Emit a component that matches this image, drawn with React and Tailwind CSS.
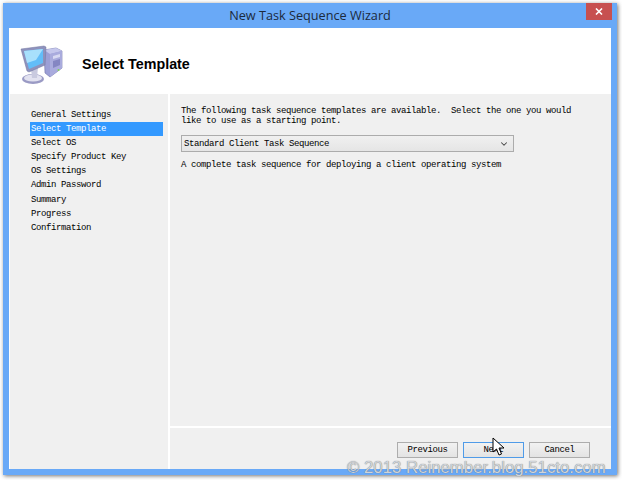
import { ChevronDown } from "lucide-react";

const STEPS = [
  "General Settings",
  "Select Template",
  "Select OS",
  "Specify Product Key",
  "OS Settings",
  "Admin Password",
  "Summary",
  "Progress",
  "Confirmation",
];

const mono = "font-['Liberation_Mono',monospace] text-[9px] tracking-[-0.4px]";

function ComputerIcon() {
  return (
    <svg width="44" height="42" viewBox="20 44 44 42">
      {/* tower */}
      <path d="M44 50 L56 48 L62 51 L62 68 L50 77 L45 73 Z" fill="#9c9fd6" stroke="#6f72a8" strokeWidth="0.6" />
      <path d="M44 50 L56 48 L62 51 L50 54 Z" fill="#c5c7ec" />
      <path d="M50 54 L62 51 L62 68 L50 77 Z" fill="#a9abdd" />
      <path d="M53 56 L60 54 L60 57 L53 59 Z" fill="#d8d9f2" />
      <path d="M53 61 L60 59 L60 65 L53 68 Z" fill="#8486c2" />
      <circle cx="58.500" cy="70" r="1" fill="#7fd05a" />
      {/* stand */}
      <ellipse cx="33" cy="79" rx="11" ry="5" fill="#9a9ac4" />
      <ellipse cx="33" cy="78" rx="9" ry="3.600" fill="#e2e2f0" />
      <path d="M31 68 L38 67 L37 78 L32 78 Z" fill="#c9cadf" />
      {/* monitor */}
      <path d="M21 49 L44 46 L46 47 L45 65 L29 72 L27 71 Z" fill="#8e92bd" stroke="#70749f" strokeWidth="0.5" />
      <path d="M24 51 L43 49 L43 63 L29 69 Z" fill="#62bdf8" />
      <path d="M24 51 L43 49 L36 60 L27 63 Z" fill="#a8e0fc" />
    </svg>
  );
}

function CursorIcon() {
  return (
    <svg width="13" height="19" viewBox="0 0 13 19">
      <path d="M1 1 L1 15 L4.500 12 L7 18 L9.500 17 L7 11 L12 11 Z" fill="#fff" stroke="#000" strokeWidth="1" />
    </svg>
  );
}

function WizardButton({ label, focused }) {
  return (
    <button
      className={`w-[61px] h-[16px] flex items-center justify-center border bg-gradient-to-b from-[#f2f2f2] to-[#e3e3e3] text-black leading-[14px] ${mono} ${
        focused ? "border-[#4f9be8]" : "border-[#adadad]"
      }`}
    >
      {label}
    </button>
  );
}

export default function App() {
  return (
    <div className="relative w-[622px] h-[480px] bg-white overflow-hidden">
      <div className="ml-[3px] mt-[3px] w-[614px] h-[472px] flex flex-col bg-[#69a9f7] shadow-[1px_1px_4px_rgba(0,0,0,0.55)]">
        {/* Title bar */}
        <div className="relative h-[25px] shrink-0 flex items-center justify-center">
          <span className="font-['Open_Sans',sans-serif] text-[12.700px] text-[#1c2a3c] leading-none">
            New Task Sequence Wizard
          </span>
          <div className="absolute right-[5px] top-0 w-[26px] h-[17px] bg-[#c75050] flex items-center justify-center">
            <svg width="8" height="7" viewBox="0 0 8 7">
              <path d="M1 0.500 L7 6.500 M7 0.500 L1 6.500" stroke="#fff" strokeWidth="1.600" />
            </svg>
          </div>
        </div>

        <div className="flex-1 flex flex-col ml-[6px] mr-[6px] mb-[6px] bg-white min-h-0">
          {/* Header */}
          <div className="h-[66px] shrink-0 flex items-center pl-[11px] pt-[8px] gap-[18px] bg-white">
            <ComputerIcon />
            <h1 className="font-['Liberation_Sans',sans-serif] font-bold text-[14.300px] text-black">
              Select Template
            </h1>
          </div>

          <div className="flex-1 flex min-h-0 pl-[1px] gap-[2px]">
            {/* Step list */}
            <div className="w-[158px] shrink-0 bg-[#f0f0f0] pt-[14px] pl-[20px] pr-[5px]">
              {STEPS.map((step) => (
                <div
                  key={step}
                  className={`h-[14.100px] leading-[14px] pl-px ${mono} ${
                    step === "Select Template" ? "bg-[#3399ff] text-white" : "text-black"
                  }`}
                >
                  {step}
                </div>
              ))}
            </div>

            {/* Main pane */}
            <div className="flex-1 flex flex-col min-w-0">
              <div className="flex-1 bg-[#f0f0f0] pt-[12px] pl-[11px]">
                <p className={`${mono} leading-[10px] text-black whitespace-pre`}>
                  {"The following task sequence templates are available.  Select the one you would\nlike to use as a starting point."}
                </p>
                <div className="mt-[9px] w-[333px] h-[17px] flex items-center justify-between pl-[2px] pr-[4px] border border-[#acacac] bg-gradient-to-b from-[#f0f0f0] to-[#e5e5e5]">
                  <span className={`${mono} leading-[14px] text-black`}>Standard Client Task Sequence</span>
                  <ChevronDown size={10} strokeWidth={2.500} className="text-[#444]" />
                </div>
                <p className={`${mono} leading-[14px] mt-[6px] text-black`}>
                  A complete task sequence for deploying a client operating system
                </p>
              </div>
              {/* Footer */}
              <div className="h-[41px] shrink-0 mt-[2px] bg-[#f0f0f0] flex justify-end items-start pt-[14px] pr-[21px] gap-[5px]">
                <WizardButton label="Previous" />
                <WizardButton label="Next" focused />
                <WizardButton label="Cancel" />
              </div>
            </div>
          </div>
        </div>
      </div>

      {/* Cursor over the Next button */}
      <div className="absolute left-[492px] top-[437px]">
        <CursorIcon />
      </div>

      {/* Blog watermark */}
      <div className="absolute left-[347px] top-[458px] font-['Liberation_Sans',sans-serif] text-[16.800px] leading-[20px] text-[#d0d4da] [text-shadow:0_0_1px_#666]">
        © 2013 Reinember.blog.51cto.com
      </div>
    </div>
  );
}
